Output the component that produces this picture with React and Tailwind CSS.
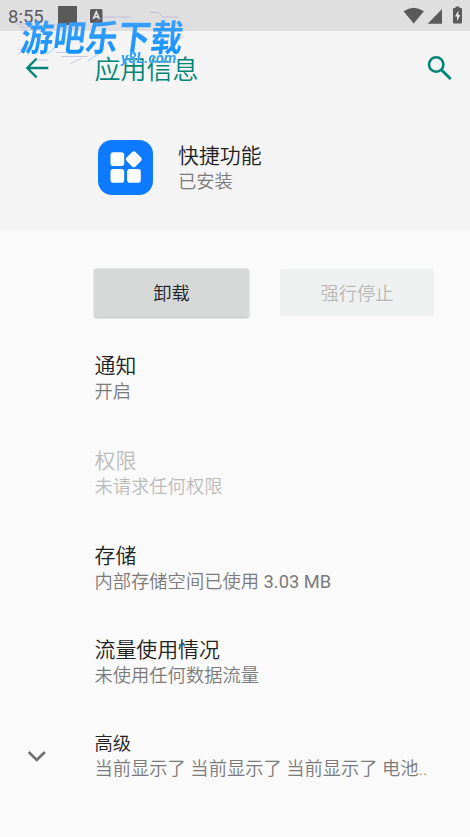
import React from 'react';

const rows = [
  { title: '通知', summary: '开启' },
  { title: '权限', summary: '未请求任何权限', disabled: true },
  { title: '存储', summary: '内部存储空间已使用', extra: ' 3.03 MB' },
  { title: '流量使用情况', summary: '未使用任何数据流量' },
];

function StatusBar() {
  return (
    <div className="flex h-[31px] items-start bg-[#dfdfdf] pl-2 text-[#5a5a5a]">
      <span className="w-[50px] pt-[6px] text-[18.5px] leading-[22px] font-normal">8:55</span>
      <svg className="h-[31px] w-[60px]" viewBox="0 0 60 31" fill="currentColor">
        <rect x="0" y="6" width="19" height="19" />
        <rect x="32" y="9" width="12.5" height="14" rx="1.5" />
        <path d="M35.3 19 L38.3 12 L41.3 19 M36.5 16.8 H40" fill="none" stroke="#dfdfdf" strokeWidth="1.8" />
      </svg>
      <svg className="mr-[7px] ml-auto h-[31px] w-[60px]" viewBox="403 0 60 31" fill="currentColor">
        <path d="M403.5 11.3 Q413.7 4.2 424 11.3 L413.7 23.5 Z" />
        <path d="M442 9 V23.7 H427.7 Z" />
        <path d="M455.5 6.5 h4 v1.5 h1.5 a1 1 0 0 1 1 1 v13.5 a1 1 0 0 1 -1 1 h-7 a1 1 0 0 1 -1 -1 V9 a1 1 0 0 1 1 -1 h1.5 Z" />
        <path d="M458.4 10.5 L454.9 16.6 h2.1 V21 l3.4 -6.1 h-2 Z" fill="#e6e6e6" />
      </svg>
    </div>
  );
}

function AppBar() {
  return (
    <div className="flex h-[74px] items-center pr-[17px] pl-[24px] text-[#008577]">
      <svg className="h-[26px] w-[26px]" viewBox="0 0 26 26" fill="none" stroke="currentColor" strokeWidth="2.3">
        <path d="M24.3 13 H3.5 M12.6 3.6 L3.3 13 L12.6 22.4" />
      </svg>
      <h1 className="mt-[3px] ml-[44.5px] text-[26px] leading-[34px] font-[350]">应用信息</h1>
      <svg className="ml-auto h-[28px] w-[28px]" viewBox="425 54 28 28" fill="none" stroke="currentColor" strokeWidth="2.6">
        <circle cx="436.2" cy="64.5" r="7.2" />
        <path d="M441.6 70 L450.7 79" strokeWidth="3" />
      </svg>
    </div>
  );
}

function AppIcon() {
  return (
    <svg className="h-[55px] w-[55px]" viewBox="98 140 55 55">
      <rect x="98" y="140" width="55" height="55" rx="14" fill="#0d7aff" />
      <g fill="#fff">
        <rect x="110.5" y="152.2" width="13.7" height="13.8" rx="2.8" />
        <rect x="110.5" y="168.9" width="13.7" height="13.8" rx="2.8" />
        <rect x="127.1" y="168.9" width="13.7" height="13.8" rx="2.8" />
        <rect x="127.5" y="153" width="12.6" height="12.6" rx="2.4" transform="rotate(45 133.8 159.3)" />
      </g>
    </svg>
  );
}

function Watermark() {
  return (
    <div className="pointer-events-none absolute top-[12px] left-[14px] h-[56px] w-[176px]">
      <svg className="absolute inset-0 h-full w-full" viewBox="14 12 176 56" fill="none" strokeWidth="0.8">
        <g stroke="#9b96dc" opacity="0.6">
          <path d="M16 24 H29 M19 27 H32 M22 30 H28 M96 21 L105 17 H131 M150 12.5 H158 L163 17 H178 M169 47 L184 36 M171 38 H181 M18 54 L29 47 M19 50 L24 47" />
          <path d="M56 52.5 H66 M61 56.5 H88 M70 64 L82 58 M35 60 H48" />
        </g>
        <path d="M88 61 L101 52 M47 54 L55 48" stroke="#82c5fa" />
      </svg>
      <div className="absolute top-[8px] left-[7px] origin-left -skew-x-[8deg] scale-y-[1.12] bg-gradient-to-b from-[#3aa0ff] to-[#0091ff] bg-clip-text text-[32.4px] leading-[38px] font-bold whitespace-nowrap text-transparent">
        游吧乐下载
      </div>
      <div className="absolute top-[37px] left-[107px] origin-left scale-x-[1.06] text-[14px] leading-[18px] font-bold whitespace-nowrap text-[#2fa0fb] italic [text-shadow:0_0_1px_#fff]">
        y8L.com
      </div>
    </div>
  );
}

export default function App() {
  return (
    <div className="relative h-[837px] w-[470px] overflow-hidden bg-[#fafafa] font-[350] text-[#212121] [font-family:Roboto,'Noto_Sans_CJK_SC',sans-serif]">
      <header className="h-[230px] bg-[#f4f4f4]">
        <StatusBar />
        <AppBar />
        <div className="flex pt-[35px] pl-[98px]">
          <AppIcon />
          <div className="ml-[25px] pt-[3px]">
            <div className="text-[20.9px] leading-[26px]">快捷功能</div>
            <div className="text-[18.3px] leading-[26px] text-[#7a7a7a]">已安装</div>
          </div>
        </div>
      </header>
      <main>
        <div className="flex gap-[31px] pt-[39px] pl-[94px]">
          <button className="h-[48px] w-[155px] rounded-[2px] bg-[#d6d8d7] pt-[2px] text-[18.3px] leading-[26px] shadow-[0_0.5px_2px_rgba(0,0,0,0.25)]">卸载</button>
          <button className="h-[47px] w-[154px] rounded-[2px] bg-[#eff1f0] pt-[2px] text-[18.3px] leading-[26px] text-[#b7b9b8]">强行停止</button>
        </div>
        <div className="flex flex-col gap-[42.8px] pt-[36px] pl-[94.5px]">
          {rows.map((row) => (
            <div key={row.title} className={row.disabled ? 'text-[#bcbcbc]' : ''}>
              <div className="text-[20.9px] leading-[26px]">{row.title}</div>
              <div className={row.disabled ? 'text-[18.3px] leading-[26px]' : 'text-[18.3px] leading-[26px] text-[#7a7a7a]'}>
                {row.summary}
                {row.extra && <span className="font-normal">{row.extra}</span>}
              </div>
            </div>
          ))}
        </div>
        <div className="flex items-center pt-[42px] pl-[27px]">
          <svg className="h-[20px] w-[20px]" viewBox="0 0 20 20" fill="none" stroke="#6f6f6f" strokeWidth="2.5">
            <path d="M1.7 6 L9.8 14 L17.9 6" />
          </svg>
          <div className="ml-[47.5px]">
            <div className="text-[18.3px] leading-[25px]">高级</div>
            <div className="text-[18.3px] leading-[25px] whitespace-nowrap text-[#7a7a7a]">当前显示了 当前显示了 当前显示了 电池..</div>
          </div>
        </div>
      </main>
      <Watermark />
    </div>
  );
}
